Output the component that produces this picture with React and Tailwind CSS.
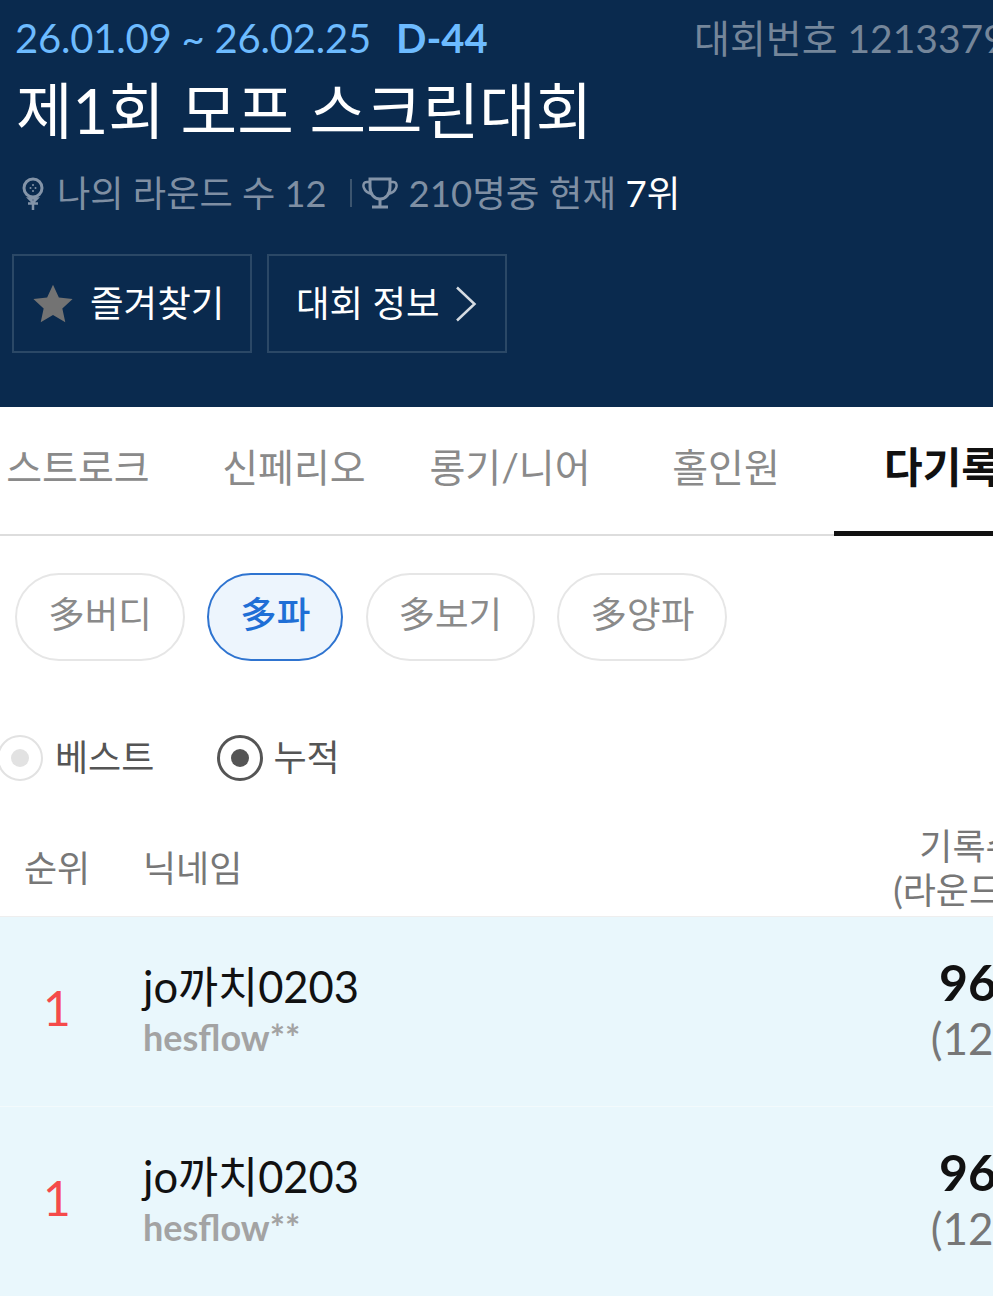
import React from 'react';

const font = "font-['Lato','Noto_Sans_CJK_KR',sans-serif]";

const tabs = ['스트로크', '신페리오', '롱기/니어', '홀인원', '다기록'];
const chips = [
  { label: '多버디', width: 'w-[170px]' },
  { label: '多파', width: 'w-[136px]', active: true },
  { label: '多보기', width: 'w-[169px]' },
  { label: '多양파', width: 'w-[170px]' },
];
const rows = [
  { rank: 1, nick: 'jo까치0203', id: 'hesflow**', count: 96, rounds: 12 },
  { rank: 1, nick: 'jo까치0203', id: 'hesflow**', count: 96, rounds: 12 },
];

const PinIcon = () => (
  <svg width="26" height="34" viewBox="0 0 26 34" fill="none" stroke="#8494a8" strokeWidth="3">
    <circle cx="13" cy="12" r="9" />
    <circle cx="10.500" cy="12" r="1" fill="#8494a8" stroke="none" />
    <circle cx="15.500" cy="12" r="1" fill="#8494a8" stroke="none" />
    <circle cx="13" cy="9" r="1" fill="#8494a8" stroke="none" />
    <circle cx="13" cy="15" r="1" fill="#8494a8" stroke="none" />
    <path d="M9 22.500h8l-4 4zM13 25v9M8 27.500h10" strokeWidth="2.500" />
  </svg>
);

const TrophyIcon = () => (
  <svg width="36" height="32" viewBox="0 0 36 32" fill="none" stroke="#8494a8" strokeWidth="3">
    <path d="M8 2h20v8c0 7-4 12-10 12S8 17 8 10V2z" />
    <path d="M8 5H5C1 5 1 9 2 11c1 3 4 5 8 6M28 5h3c4 0 4 4 3 6-1 3-4 5-8 6" strokeWidth="2.500" />
    <path d="M18 22v7M10 30h16" />
  </svg>
);

const App = () => {
  return (
    <div className={`h-[1296px] w-[993px] overflow-hidden bg-white ${font}`}>
      <header className="h-[407px] bg-[#0a2a4e] pt-[12px]">
        <div className="flex h-[52px] items-center whitespace-nowrap pl-[15px]">
          <span className="w-[381px] shrink-0 text-[40px] tracking-[-0.2px] text-[#6dbbff]">26.01.09 ~ 26.02.25</span>
          <span className="w-[298px] shrink-0 text-[40px] font-bold text-[#6dbbff]">D-44</span>
          <span className="shrink-0 text-[39px] text-[#75869a]">대회번호 1213379</span>
        </div>
        <h1 className="mt-[6px] pl-[16px] text-[61.500px] leading-[80px] font-normal whitespace-nowrap text-white">제1회 모프 스크린대회</h1>
        <div className="mt-[23px] flex h-[40px] items-center whitespace-nowrap pl-[20px] text-[36.200px] text-[#7f8fa3]">
          <PinIcon />
          <span className="ml-[11px]">나의 라운드 수 12</span>
          <span className="mr-[10px] ml-[23px] h-[28px] w-[2px] bg-[#3c556f]" />
          <TrophyIcon />
          <span className="ml-[11px] text-[36.600px]">210명중 현재 <span className="text-white">7위</span></span>
        </div>
        <div className="mt-[41px] flex gap-[15px] pl-[12px]">
          <button className="flex h-[99px] w-[240px] items-center border-2 border-[#2b4866] pl-[17px] text-[36.500px] text-white">
            <svg width="44" height="44" viewBox="0 0 24 24" fill="#737373">
              <path d="M12 1.500l3.200 7 7.500.8-5.600 5.100 1.600 7.500L12 18l-6.700 3.900 1.600-7.500L1.300 9.300l7.500-.8z" />
            </svg>
            <span className="ml-[15px]">즐겨찾기</span>
          </button>
          <button className="flex h-[99px] w-[240px] items-center border-2 border-[#2b4866] pl-[27px] text-[36.500px] text-white">
            <span>대회 정보</span>
            <svg className="ml-[15px]" width="22" height="36" viewBox="0 0 22 36" fill="none" stroke="#d5dbe2" strokeWidth="2.500">
              <path d="M2 1.500L19.500 18 2 34.500" />
            </svg>
          </button>
        </div>
      </header>

      <nav className="-ml-[30px] flex h-[129px] w-[1080px] border-b-2 border-[#dddddd]">
        {tabs.map((tab, i) => (
          <div
            key={tab}
            className={
              i === 4
                ? 'mb-[-2px] flex h-[129px] w-[216px] items-center justify-center border-b-[5px] border-[#111111] pb-[4px] text-[42px] font-bold whitespace-nowrap text-[#111111]'
                : 'flex h-[127px] w-[216px] items-center justify-center pb-[6px] text-[39px] whitespace-nowrap text-[#8a8a8a]'
            }
          >
            {tab}
          </div>
        ))}
      </nav>

      <div className="mt-[37px] flex gap-[22.600px] pl-[15px]">
        {chips.map(chip => (
          <div
            key={chip.label}
            className={
              chip.active
                ? `-ml-[0.400px] flex h-[88px] ${chip.width} items-center justify-center rounded-full border-2 border-[#2f74d0] bg-[#edf5fd] pb-[6px] text-[36.500px] font-medium text-[#1f6fd6]`
                : `flex h-[88px] ${chip.width} items-center justify-center rounded-full border-2 border-[#e6e6e6] pb-[6px] text-[36.500px] text-[#8a8a8a]`
            }
          >
            {chip.label}
          </div>
        ))}
      </div>

      <div className="mt-[74px] flex h-[46px] items-center text-[36px] text-[#555555]">
        <span className="-ml-[3px] flex h-[46px] w-[46px] items-center justify-center rounded-full border-2 border-[#e2e2e2]">
          <span className="h-[18px] w-[18px] rounded-full bg-[#e2e2e2]" />
        </span>
        <span className="ml-[12px] pb-[2px]">베스트</span>
        <span className="ml-[63px] flex h-[46px] w-[46px] items-center justify-center rounded-full border-[3px] border-[#555555]">
          <span className="h-[18px] w-[18px] rounded-full bg-[#555555]" />
        </span>
        <span className="ml-[10px] pb-[2px]">누적</span>
      </div>

      <div className="w-[1100px]">
        <div className="mt-[39px] flex h-[97px] items-center border-b border-[#eeeeee] text-[36px] text-[#777777]">
          <span className="w-[143px] pl-[24px]">순위</span>
          <span className="w-[737px]">닉네임</span>
          <span className="w-[178px] text-center leading-[44px] whitespace-nowrap">
            기록수
            <br />
            (라운드수)
          </span>
        </div>
        {rows.map((row, i) => (
          <div key={i} className="flex h-[190px] items-center border-b border-[#f3fafc] bg-[#e9f7fc]">
            <span className="w-[114px] pb-[8px] text-center text-[48px] text-[#f54a4a]">{row.rank}</span>
            <div className="ml-[29px] w-[737px] pb-[8px]">
              <div className="text-[43.500px] leading-[58px] text-[#111111]">{row.nick}</div>
              <div className="text-[36px] leading-[44px] font-bold text-[#a3a3a3]">{row.id}</div>
            </div>
            <div className="w-[176px] pb-[2px] text-center">
              <div className="text-[50px] leading-[56px] font-bold text-[#111111]">{row.count}</div>
              <div className="text-[44px] leading-[57px] text-[#777777]">({row.rounds})</div>
            </div>
          </div>
        ))}
      </div>
    </div>
  );
};

export default App;
